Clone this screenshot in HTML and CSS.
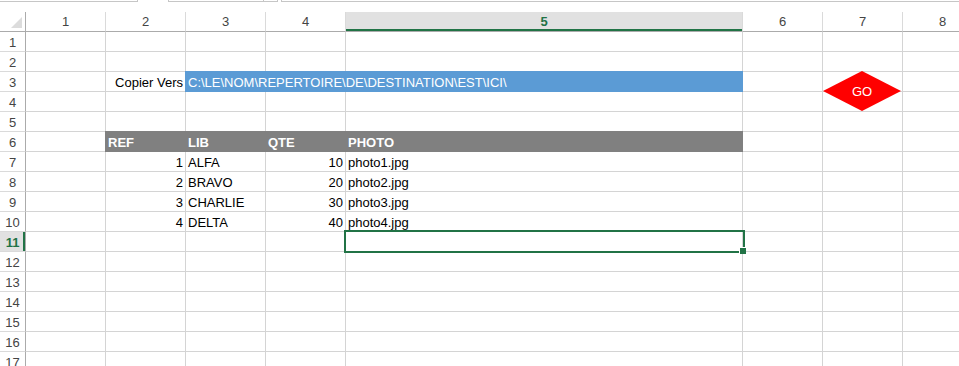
FILE: index.html
```html
<!DOCTYPE html>
<html lang="fr">
<head>
  <meta charset="UTF-8">
  <title>Copier photos</title>
  <link rel="stylesheet" href="styles.css">
</head>
<body>
  <div class="toolbar">
    <div class="tb-box tb-name"></div>
    <div class="tb-box tb-func"><span class="tb-drop"></span></div>
    <div class="tb-box tb-formula"></div>
  </div>

  <div class="sheet">
    <div class="row head">
      <div class="cell corner"><span class="tri"></span></div>
      <div class="cell">1</div>
      <div class="cell">2</div>
      <div class="cell">3</div>
      <div class="cell">4</div>
      <div class="cell active">5</div>
      <div class="cell">6</div>
      <div class="cell">7</div>
      <div class="cell">8</div>
    </div>

    <div class="row"><div class="cell rh">1</div><div class="cell"></div><div class="cell"></div><div class="cell"></div><div class="cell"></div><div class="cell"></div><div class="cell"></div><div class="cell"></div><div class="cell"></div></div>
    <div class="row"><div class="cell rh">2</div><div class="cell"></div><div class="cell"></div><div class="cell"></div><div class="cell"></div><div class="cell"></div><div class="cell"></div><div class="cell"></div><div class="cell"></div></div>
    <div class="row">
      <div class="cell rh">3</div>
      <div class="cell"></div>
      <div class="cell num">Copier Vers</div>
      <div class="cell path">C:\LE\NOM\REPERTOIRE\DE\DESTINATION\EST\ICI\</div>
      <div class="cell"></div>
      <div class="cell"></div>
      <div class="cell"></div>
    </div>
    <div class="row"><div class="cell rh">4</div><div class="cell"></div><div class="cell"></div><div class="cell"></div><div class="cell"></div><div class="cell"></div><div class="cell"></div><div class="cell"></div><div class="cell"></div></div>
    <div class="row"><div class="cell rh">5</div><div class="cell"></div><div class="cell"></div><div class="cell"></div><div class="cell"></div><div class="cell"></div><div class="cell"></div><div class="cell"></div><div class="cell"></div></div>
    <div class="row">
      <div class="cell rh">6</div>
      <div class="cell"></div>
      <div class="cell th">REF</div>
      <div class="cell th">LIB</div>
      <div class="cell th">QTE</div>
      <div class="cell th">PHOTO</div>
      <div class="cell"></div>
      <div class="cell"></div>
      <div class="cell"></div>
    </div>
    <div class="row">
      <div class="cell rh">7</div><div class="cell"></div>
      <div class="cell num">1</div><div class="cell">ALFA</div><div class="cell num">10</div><div class="cell">photo1.jpg</div>
      <div class="cell"></div><div class="cell"></div><div class="cell"></div>
    </div>
    <div class="row">
      <div class="cell rh">8</div><div class="cell"></div>
      <div class="cell num">2</div><div class="cell">BRAVO</div><div class="cell num">20</div><div class="cell">photo2.jpg</div>
      <div class="cell"></div><div class="cell"></div><div class="cell"></div>
    </div>
    <div class="row">
      <div class="cell rh">9</div><div class="cell"></div>
      <div class="cell num">3</div><div class="cell">CHARLIE</div><div class="cell num">30</div><div class="cell">photo3.jpg</div>
      <div class="cell"></div><div class="cell"></div><div class="cell"></div>
    </div>
    <div class="row">
      <div class="cell rh">10</div><div class="cell"></div>
      <div class="cell num">4</div><div class="cell">DELTA</div><div class="cell num">40</div><div class="cell">photo4.jpg</div>
      <div class="cell"></div><div class="cell"></div><div class="cell"></div>
    </div>
    <div class="row"><div class="cell rh active">11</div><div class="cell"></div><div class="cell"></div><div class="cell"></div><div class="cell"></div><div class="cell"></div><div class="cell"></div><div class="cell"></div><div class="cell"></div></div>
    <div class="row"><div class="cell rh">12</div><div class="cell"></div><div class="cell"></div><div class="cell"></div><div class="cell"></div><div class="cell"></div><div class="cell"></div><div class="cell"></div><div class="cell"></div></div>
    <div class="row"><div class="cell rh">13</div><div class="cell"></div><div class="cell"></div><div class="cell"></div><div class="cell"></div><div class="cell"></div><div class="cell"></div><div class="cell"></div><div class="cell"></div></div>
    <div class="row"><div class="cell rh">14</div><div class="cell"></div><div class="cell"></div><div class="cell"></div><div class="cell"></div><div class="cell"></div><div class="cell"></div><div class="cell"></div><div class="cell"></div></div>
    <div class="row"><div class="cell rh">15</div><div class="cell"></div><div class="cell"></div><div class="cell"></div><div class="cell"></div><div class="cell"></div><div class="cell"></div><div class="cell"></div><div class="cell"></div></div>
    <div class="row"><div class="cell rh">16</div><div class="cell"></div><div class="cell"></div><div class="cell"></div><div class="cell"></div><div class="cell"></div><div class="cell"></div><div class="cell"></div><div class="cell"></div></div>
    <div class="row"><div class="cell rh">17</div><div class="cell"></div><div class="cell"></div><div class="cell"></div><div class="cell"></div><div class="cell"></div><div class="cell"></div><div class="cell"></div><div class="cell"></div></div>

    <!-- cellule sélectionnée -->
    <div class="selection"><span class="handle"></span></div>

    <!-- bouton GO -->
    <div class="go">
      <svg width="78" height="40" viewBox="0 0 78 40"><polygon points="39,0 78,20 39,40 0,20" fill="#ff0000"/></svg>
      <span>GO</span>
    </div>
  </div>
</body>
</html>
```

FILE: styles.css
```css
:root {
  --grid: #d4d4d4;
  --head-line: #ababab;
  --green: #217346;
  --blue: #5b9bd5;
  --gray: #808080;
}

html, body {
  margin: 0;
  height: 100%;
  overflow: hidden;
  background: #fff;
}

body {
  font-family: "Liberation Sans", Arial, sans-serif;
  font-size: 13px;
  color: #000;
}

/* bandeau du haut (bas de la barre de formule) */
.toolbar {
  display: flex;
  height: 12px;
}

.tb-box {
  box-sizing: border-box;
  height: 2px;
  border-bottom: 1px solid #c6c6c6;
}

.tb-name {
  width: 138px;
  border-right: 1px solid #c6c6c6;
}

.tb-func {
  position: relative;
  width: 110px;
  margin-left: 30px;
  border-left: 1px solid #c6c6c6;
  border-right: 1px solid #c6c6c6;
}

.tb-drop {
  position: absolute;
  left: 94px;
  top: 0;
  width: 1px;
  height: 1px;
  background: #c6c6c6;
}

.tb-formula {
  flex: 1;
  margin-left: 3px;
  border-left: 1px solid #c6c6c6;
}

/* grille */
.sheet {
  position: relative;
  width: 982px;
}

.row {
  display: grid;
  grid-template-columns: 26px 80px 80px 80px 80px 397px 80px 80px 80px;
  height: 20px;
}

.cell {
  box-sizing: border-box;
  height: 20px;
  padding: 1px 2px 0;
  line-height: 19px;
  border-right: 1px solid var(--grid);
  border-bottom: 1px solid var(--grid);
  white-space: nowrap;
  overflow: visible;
}

.num {
  text-align: right;
}

/* en-têtes */
.head .cell {
  color: #444;
  text-align: center;
  border-right-color: #dadada;
  border-bottom-color: var(--head-line);
  padding-top: 0;
}

.head .cell.active {
  background: #e1e1e1;
  color: var(--green);
  font-weight: bold;
  box-shadow: inset 0 -2px 0 var(--green);
}

.corner {
  position: relative;
}

.corner .tri {
  position: absolute;
  right: 3px;
  bottom: 3px;
  width: 0;
  height: 0;
  border-left: 11px solid transparent;
  border-bottom: 11px solid #dcdcdc;
}

.head .corner {
  border-right-color: var(--head-line);
}

.rh {
  color: #444;
  text-align: center;
  padding: 1px 0 0;
  border-right-color: var(--head-line);
  border-bottom-color: #dadada;
}

.rh.active {
  background: #e1e1e1;
  color: var(--green);
  font-weight: bold;
  box-shadow: inset -2px 0 0 var(--green);
}

/* remplissages */
.path {
  grid-column: span 3;
  background: var(--blue);
  border-color: var(--blue);
  color: #fff;
  box-shadow: -1px -1px 0 var(--blue), 0 -1px 0 var(--blue), -1px 0 0 var(--blue);
}

.th {
  background: var(--gray);
  border-color: var(--gray);
  color: #fff;
  font-weight: bold;
  box-shadow: -1px -1px 0 var(--gray), 0 -1px 0 var(--gray), -1px 0 0 var(--gray);
}

/* sélection */
.selection {
  position: absolute;
  left: 344px;
  top: 218px;
  width: 401px;
  height: 23px;
  box-sizing: border-box;
  border: 2px solid var(--green);
}

.selection .handle {
  position: absolute;
  right: -3px;
  bottom: -3px;
  width: 6px;
  height: 6px;
  background: var(--green);
  border-left: 1px solid #fff;
  border-top: 1px solid #fff;
}

/* bouton */
.go {
  position: absolute;
  left: 823px;
  top: 59px;
  width: 78px;
  height: 40px;
  display: flex;
  align-items: center;
  justify-content: center;
}

.go svg {
  position: absolute;
  left: 0;
  top: 0;
}

.go span {
  position: relative;
  color: #fff;
  font-size: 13px;
}
```
